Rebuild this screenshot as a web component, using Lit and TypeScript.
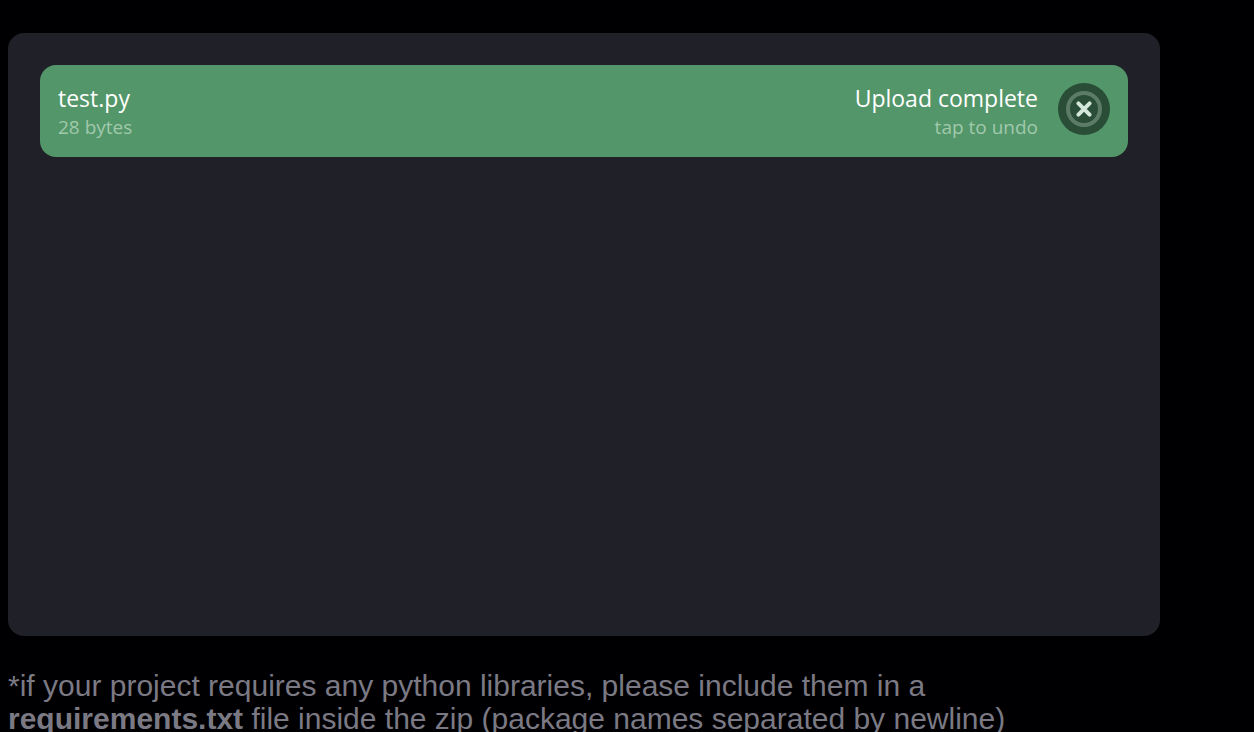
import { LitElement, html, css } from "lit";
import { customElement, state } from "lit/decorators.js";

interface UploadedFile {
  name: string;
  size: string;
}

@customElement("app-root")
export class AppRoot extends LitElement {
  static styles = css`
    :host {
      display: block;
      box-sizing: border-box;
      min-height: 100vh;
      padding: 33px 94px 0 8px;
      background: #000002;
      font-family: "Liberation Sans", Arial, sans-serif;
    }
    .panel {
      box-sizing: border-box;
      min-height: 603px;
      padding: 32px;
      border-radius: 16px;
      background: #202029;
    }
    .files {
      margin: 0;
      padding: 0;
      list-style: none;
    }
    .file {
      display: flex;
      align-items: center;
      justify-content: space-between;
      padding: 18px;
      border-radius: 16px;
      background: #539669;
      color: #ffffff;
      font-family: "Open Sans", "Noto Sans", sans-serif;
    }
    .info {
      display: flex;
      flex-direction: column;
      gap: 1px;
    }
    .status {
      flex: 1;
      align-items: flex-end;
      margin-right: 20px;
    }
    .main {
      font-size: 23px;
      line-height: 31px;
    }
    .sub {
      font-size: 19px;
      line-height: 24px;
      color: #a1c9ad;
    }
    .undo {
      flex: none;
      align-self: flex-start;
      width: 52px;
      height: 52px;
      padding: 0;
      border: 0;
      border-radius: 50%;
      background: #294d36;
      cursor: pointer;
    }
    .icon {
      display: block;
      width: 52px;
      height: 52px;
    }
    .note {
      margin: 33px 0 0;
      color: #7b7a84;
      font-size: 30px;
      line-height: 33px;
    }
  `;

  @state() private files: UploadedFile[] = [{ name: "test.py", size: "28 bytes" }];

  private undo(file: UploadedFile) {
    this.files = this.files.filter((f) => f !== file);
  }

  render() {
    return html`
      <section class="panel">
        <ul class="files">
          ${this.files.map(
            (file) => html`
              <li class="file">
                <div class="info">
                  <span class="main">${file.name}</span>
                  <span class="sub">${file.size}</span>
                </div>
                <div class="info status">
                  <span class="main">Upload complete</span>
                  <span class="sub">tap to undo</span>
                </div>
                <button class="undo" type="button" aria-label="Undo upload" @click=${() => this.undo(file)}>
                  <svg class="icon" viewBox="0 0 52 52" fill="none" aria-hidden="true">
                    <circle cx="26" cy="26" r="16" stroke="#5d7c68" stroke-width="4" />
                    <path d="M20.4 20.4 31.6 31.6M31.6 20.4 20.4 31.6" stroke="#d3e7da" stroke-width="4" stroke-linecap="round" />
                  </svg>
                </button>
              </li>
            `
          )}
        </ul>
      </section>
      <p class="note">
        *if your project requires any python libraries, please include them in a<br />
        <strong>requirements.txt</strong> file inside the zip (package names separated by newline)
      </p>
    `;
  }
}
